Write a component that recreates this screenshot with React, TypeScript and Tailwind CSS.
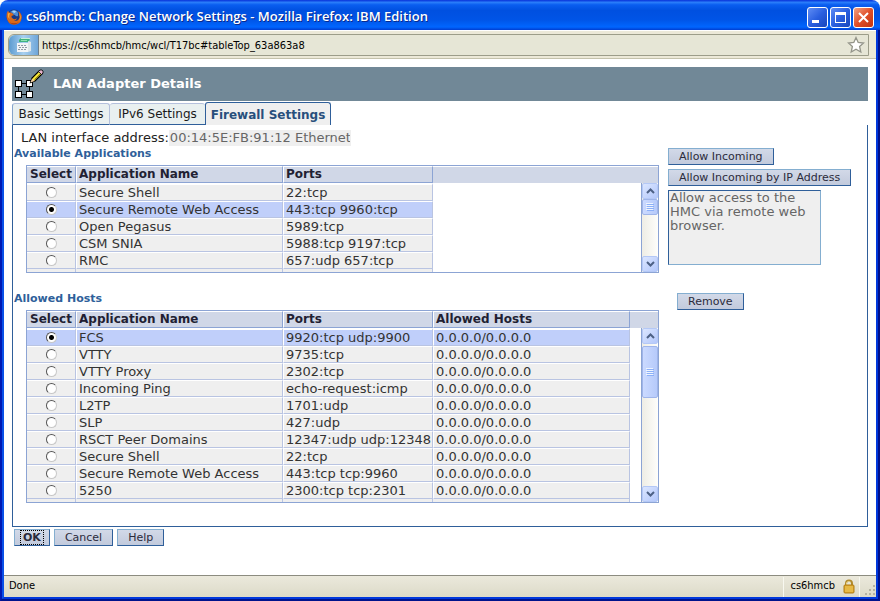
import { useState } from "react";

interface AppRow {
  name: string;
  ports: string;
  hosts?: string;
}

const availableApps: AppRow[] = [
  { name: "Secure Shell", ports: "22:tcp" },
  { name: "Secure Remote Web Access", ports: "443:tcp 9960:tcp" },
  { name: "Open Pegasus", ports: "5989:tcp" },
  { name: "CSM SNIA", ports: "5988:tcp 9197:tcp" },
  { name: "RMC", ports: "657:udp 657:tcp" },
];

const allowedHosts: AppRow[] = [
  { name: "FCS", ports: "9920:tcp udp:9900", hosts: "0.0.0.0/0.0.0.0" },
  { name: "VTTY", ports: "9735:tcp", hosts: "0.0.0.0/0.0.0.0" },
  { name: "VTTY Proxy", ports: "2302:tcp", hosts: "0.0.0.0/0.0.0.0" },
  { name: "Incoming Ping", ports: "echo-request:icmp", hosts: "0.0.0.0/0.0.0.0" },
  { name: "L2TP", ports: "1701:udp", hosts: "0.0.0.0/0.0.0.0" },
  { name: "SLP", ports: "427:udp", hosts: "0.0.0.0/0.0.0.0" },
  { name: "RSCT Peer Domains", ports: "12347:udp udp:12348", hosts: "0.0.0.0/0.0.0.0" },
  { name: "Secure Shell", ports: "22:tcp", hosts: "0.0.0.0/0.0.0.0" },
  { name: "Secure Remote Web Access", ports: "443:tcp tcp:9960", hosts: "0.0.0.0/0.0.0.0" },
  { name: "5250", ports: "2300:tcp tcp:2301", hosts: "0.0.0.0/0.0.0.0" },
];

function FirefoxIcon() {
  return (
    <svg width="16" height="16" viewBox="0 0 16 16" aria-hidden="true">
      <circle cx="8" cy="8" r="7.500" fill="#173a86" />
      <path d="M4 3Q7 0 11 2Q13 4 12 7Q10 8 9 6Q7 6 6 4z" fill="#4f8fd8" />
      <path d="M6 2Q8 1 10 2L9 4Q7 4 6 2z" fill="#a9d2f5" />
      <path d="M0.500 8Q0 4 2 1.500L3 3.500Q5 3 6.500 4.500L8 6L5.500 7Q5 9 7.500 10Q10 10.500 11 9Q10.500 11.500 8 12Q12.500 12.500 13.500 8.500Q14 5 12 2Q16 4.500 15.800 8.500Q15 15.500 8 15.800Q1.500 15.500 0.500 8z" fill="#d9691a" />
      <path d="M2 4.500L4 4Q2.500 7 3.500 10Q1.500 8 2 4.500zM13 4Q16 8 13.500 12Q15 8 13 4z" fill="#f7b340" />
      <path d="M3 13Q8 16 13 13Q8 17.500 3 13z" fill="#8f2a12" />
    </svg>
  );
}

function ServerIcon() {
  return (
    <svg width="16" height="15" viewBox="0 0 16 15" aria-hidden="true">
      <path d="M3 2L5 0h9l-1 4H3z" fill="#3fb37f" />
      <path d="M5 0h9v1H5z" fill="#c4f0d8" />
      <path d="M5 2h6v1H5z" fill="#8fe0b4" />
      <path d="M1 5h11v9H1z" fill="#f3f5f7" />
      <path d="M12 3l3 1v9l-3 1z" fill="#dfe7ea" />
      <path d="M2 7h2v1H2zM5 7h2v1H5zM8 7h2v1H8zM3 9h2v1H3zM6 9h2v1H6zM9 9h2v1H9zM2 11h2v1H2zM5 11h2v1H5zM8 11h2v1H8z" fill="#8d9aa5" />
    </svg>
  );
}

function NetworkEditIcon() {
  return (
    <svg width="30" height="30" viewBox="0 0 30 30" aria-hidden="true">
      <g shapeRendering="crispEdges">
        <path d="M7 14h6M7 25h6v1H7zM4 17h1v5H4zM15 17h1v5h-1zM7 14h6v1H7z" fill="#000" />
        <path d="M1 11h7v7H1zM12 11h7v7h-7zM1 22h7v7H1zM12 22h7v7h-7z" fill="#000" />
        <path d="M2 12h5v5H2zM13 12h5v5h-5zM2 23h5v5H2zM13 23h5v5h-5z" fill="#fff" />
        <path d="M8 14h4v1H8zM8 25h4v1H8zM4 18h1v4H4zM15 18h1v4h-1z" fill="#000" />
      </g>
      <path d="M16.500 13.500L18 9L25.500 1.500L28.500 4.500L21 12z" fill="#f8e838" stroke="#000" strokeWidth="1.200" />
      <path d="M20.500 10.500L26.500 4.500" stroke="#9c8a10" strokeWidth="1" />
      <path d="M16.500 13.500L18 9.500L20.500 12z" fill="#f4d0a8" />
      <path d="M24.500 2.500L26 1H28L29 2V4L27.500 5.500z" fill="#e8b4cc" stroke="#000" strokeWidth="0.800" />
    </svg>
  );
}

function LockIcon() {
  return (
    <svg width="12" height="15" viewBox="0 0 12 15" aria-hidden="true">
      <path d="M3 7V4.500a3 3 0 0 1 6 0V7" fill="none" stroke="#b08a2c" strokeWidth="2" />
      <path d="M3.500 6V4a2.500 2.500 0 0 1 4 -1" fill="none" stroke="#e9d28a" strokeWidth="1" />
      <rect x="1" y="6" width="10" height="8" rx="1" fill="#dca62c" stroke="#b07c14" strokeWidth="1" />
      <path d="M2 8h8M2 10h8M2 12h8" stroke="#f0cc60" strokeWidth="1" />
    </svg>
  );
}

function Arrow({ down = false }: { down?: boolean }) {
  return (
    <button
      type="button"
      aria-label={down ? "Scroll down" : "Scroll up"}
      className="flex h-4 w-4 shrink-0 items-center justify-center rounded-xs border border-[#b4c8f6] bg-gradient-to-br from-[#dbe6ff] to-[#b4c8fb]"
    >
      <svg width="9" height="6" viewBox="0 0 9 6" aria-hidden="true">
        <path d={down ? "M1 1L4.500 4.500L8 1" : "M1 5L4.500 1.500L8 5"} fill="none" stroke="#4d6185" strokeWidth="2" />
      </svg>
    </button>
  );
}

function ScrollBar({ tall = false }: { tall?: boolean }) {
  return (
    <div className="flex w-[17px] flex-1 flex-col self-end border-l border-[#8ca4d4] bg-gradient-to-r from-[#eeede5] to-[#fefefb]">
      <Arrow />
      <div
        className={`${tall ? "mt-0.5 h-[52px]" : "h-4"} flex w-4 items-center justify-center rounded-xs border border-[#9fb5ea] bg-gradient-to-r from-[#cbdaff] to-[#b6cafa]`}
      >
        <svg width="8" height="8" viewBox="0 0 8 8" shapeRendering="crispEdges" aria-hidden="true">
          <path d="M0 0h7v1H0zM0 2h7v1H0zM0 4h7v1H0zM0 6h7v1H0z" fill="#eef4fe" />
          <path d="M1 1h7v1H1zM1 3h7v1H1zM1 5h7v1H1zM1 7h7v1H1z" fill="#8cb0f8" />
        </svg>
      </div>
      <div className="flex-1" />
      <Arrow down />
    </div>
  );
}

interface AppTableProps {
  label: string;
  rows: AppRow[];
  initial: number;
  showHosts?: boolean;
}

function AppTable({ label, rows, initial, showHosts = false }: AppTableProps) {
  const [selected, setSelected] = useState(initial);
  const th = "border-t border-r border-b border-t-white border-r-[#8ca4d4] border-b-[#8ca4d4] bg-[#d0d7e7] p-0 text-[12px] leading-[15px] font-bold whitespace-nowrap";
  const td = "border-r border-b border-t-white border-r-[#b9c4e2] border-b-[#b9c4e2] p-0 whitespace-nowrap";
  const lead = "border-l border-l-white pl-0.5 text-left";
  const edge = "border-r border-[#b9c4e2] bg-[#efefef] p-0";

  return (
    <div className="ml-3 flex overflow-hidden border border-[#8ca4d4]">
      <table
        aria-label={label}
        className={`${showHosts ? "w-[603px]" : "w-[406px]"} shrink-0 table-fixed border-separate border-spacing-0 text-[13px] leading-[15px] text-[#333]`}
      >
        <colgroup>
          <col className="w-[49px]" />
          <col className="w-[207px]" />
          <col className="w-[150px]" />
          {showHosts && <col className="w-[197px]" />}
        </colgroup>
        <thead className="text-[#221f33]">
          <tr>
            <th scope="col" className={th}>Select</th>
            <th scope="col" className={`${th} ${lead}`}>Application Name</th>
            <th scope="col" className={`${th} ${lead}`}>Ports</th>
            {showHosts && <th scope="col" className={`${th} ${lead}`}>Allowed Hosts</th>}
          </tr>
        </thead>
        <tbody>
          {rows.map((row, index) => {
            const bg = index === selected ? "bg-[#c0cffa]" : "bg-[#efefef]";
            const top = index === 0 ? "border-t-2" : "border-t";
            const cell = `${td} ${top} ${bg}`;
            return (
              <tr key={row.name}>
                <td className={cell}>
                  <input
                    type="radio"
                    name={label}
                    aria-label={row.name}
                    checked={index === selected}
                    onChange={() => setSelected(index)}
                    className="mx-auto block size-[11px] appearance-none rounded-full border border-[#c8c8c8] border-t-[#555] border-l-[#555] bg-white checked:bg-[radial-gradient(circle,#000_2px,#fff_3px)]"
                  />
                </td>
                <td className={`${cell} ${lead}`}>{row.name}</td>
                <td className={`${cell} ${lead}`}>{row.ports}</td>
                {showHosts && <td className={`${cell} ${lead}`}>{row.hosts}</td>}
              </tr>
            );
          })}
          {/* top edge of the next row in the scroll area */}
          <tr aria-hidden="true" className="h-[3px]">
            <td className={edge} />
            <td className={edge} />
            <td className={edge} />
            {showHosts && <td className={edge} />}
          </tr>
        </tbody>
      </table>
      <div className="flex flex-1 flex-col">
        <div className="h-[17px] border-t border-white bg-[#d0d7e7]" />
        <ScrollBar tall={showHosts} />
      </div>
    </div>
  );
}

function PushButton({ children, focused = false }: { children: string; focused?: boolean }) {
  return (
    <button
      type="button"
      className={`${focused ? "px-[5px] font-bold" : "px-2.5"} flex h-[17px] items-center border border-t-[#84aed0] border-r-[#2f5f9a] border-b-[#2f5f9a] border-l-[#84aed0] bg-gradient-to-b from-[#d2d9e8] to-[#c2cadc] text-[11px] leading-[13px] whitespace-nowrap text-[#2b2b3b]`}
    >
      {focused ? <span className="border border-dotted border-black px-0.5 leading-[13px]">{children}</span> : children}
    </button>
  );
}

function TitleBar() {
  const box = "flex size-[21px] items-center justify-center rounded-[3px] border border-white";
  const blue = "bg-gradient-to-br from-[#5f8cf4] via-[#2a5fe0] to-[#1846bc]";
  return (
    <header className="flex h-[30px] items-center gap-[2px] bg-[linear-gradient(to_bottom,#0831d9_0%,#2a7dfa_8%,#0a5ef0_16%,#0050e0_35%,#0054e6_65%,#0066ff_90%,#003dd0_100%)] pt-1 pr-[6px] pl-[6px]">
      <FirefoxIcon />
      <h1 className="flex-1 pl-0.5 font-['Open_Sans',sans-serif] text-[13px] font-semibold whitespace-nowrap text-white [text-shadow:1px_1px_#0a2a8c]">
        cs6hmcb: Change Network Settings - Mozilla Firefox: IBM Edition
      </h1>
      <button type="button" aria-label="Minimize" className={`${box} ${blue}`}>
        <svg width="15" height="15" viewBox="0 0 15 15"><path d="M2 10h7v3H2z" fill="#fff" /></svg>
      </button>
      <button type="button" aria-label="Maximize" className={`${box} ${blue}`}>
        <svg width="15" height="15" viewBox="0 0 15 15"><path d="M2 2h11v11H2zM3 5v7h9V5z" fill="#fff" fillRule="evenodd" /></svg>
      </button>
      <button type="button" aria-label="Close" className={`${box} bg-gradient-to-br from-[#f0a080] via-[#e04e28] to-[#c03410]`}>
        <svg width="15" height="15" viewBox="0 0 15 15"><path d="M3 3l9 9M12 3l-9 9" stroke="#fff" strokeWidth="2" /></svg>
      </button>
    </header>
  );
}

function AddressBar() {
  return (
    <div className="border-t border-b border-t-white border-b-[#c4c2ac] bg-[#ece9d8] pt-[3px] pr-[7px] pb-0.5 pl-1">
      <div className="flex h-[22px] items-center rounded-l-md border border-[#9c9d8a] bg-[#e6e6d6]">
        <button
          type="button"
          aria-label="Site identity"
          className="flex h-5 w-[30px] items-center justify-center rounded-l-md border-r border-[#6f7f8c] bg-gradient-to-r from-[#5b9bd0] via-[#a8d0f0] to-[#6fa6d8]"
        >
          <ServerIcon />
        </button>
        <input
          type="text"
          aria-label="Address"
          defaultValue="https://cs6hmcb/hmc/wcl/T17bc#tableTop_63a863a8"
          className="min-w-0 flex-1 bg-transparent pt-0.5 pl-[3px] text-[11px] text-black outline-none [font-family:'DejaVu_Sans_Condensed','DejaVu_Sans',sans-serif]"
        />
        <button type="button" aria-label="Bookmark" className="mr-[3px]">
          <svg width="18" height="18" viewBox="0 0 18 18">
            <path d="M9 1.500L11.200 6.500L16.500 7L12.600 10.500L13.800 16L9 13.200L4.200 16L5.400 10.500L1.500 7L6.800 6.500z" fill="#fff" stroke="#94958a" strokeWidth="1.300" />
          </svg>
        </button>
      </div>
    </div>
  );
}

function Tabs() {
  const tab = "flex h-[22px] items-center justify-center rounded-t-[3px] border border-[#b4c0dc] border-b-[#2f5f9a] bg-[#e9f0f0] text-[12px] whitespace-nowrap text-[#1a1a1a]";
  return (
    <div role="tablist" className="mt-px flex items-end">
      <button type="button" role="tab" aria-selected="false" className={`${tab} w-[98px] border-l-[#84a4cc]`}>Basic Settings</button>
      <button type="button" role="tab" aria-selected="false" className={`${tab} w-[95px] border-r-0 border-l-0`}>IPv6 Settings</button>
      <button
        type="button"
        role="tab"
        aria-selected="true"
        className="flex h-[23px] w-[126px] items-center justify-center rounded-t-[3px] border border-b-0 border-[#2f5f9a] bg-[#efefef] pt-0.5 text-[12px] font-bold whitespace-nowrap text-[#284f7c]"
      >
        Firewall Settings
      </button>
    </div>
  );
}

export default function App() {
  return (
    <div className="flex min-h-screen flex-col overflow-hidden rounded-t-lg bg-white font-['DejaVu_Sans',sans-serif]">
      <TitleBar />
      <div className="flex flex-1 flex-col border-x-2 border-b-2 border-t-0 border-[#0019b4] border-r-[#00108c] border-b-[#00138c]">
        <div className="flex flex-1 flex-col border-x-2 border-b-2 border-[#0a50e8] border-r-[#0038dc] border-b-[#0038dc]">
          <AddressBar />

          <main className="flex-1 px-2 pt-2">
            <div className="flex h-[34px] items-center gap-[9px] bg-[#718897] pl-0.5">
              <NetworkEditIcon />
              <h2 className="text-[13px] font-bold text-white">LAN Adapter Details</h2>
            </div>

            <Tabs />

            <div className="border-r border-b border-l border-[#2f5f9a] pb-[23px]">
              <div className="flex h-[22px] items-center pt-1 pl-2 text-[13px]">
                <label htmlFor="lan-address" className="text-[#222]">LAN interface address:</label>
                <input
                  id="lan-address"
                  readOnly
                  value="00:14:5E:FB:91:12 Ethernet"
                  className="h-4 w-[182px] bg-[#efefef] px-px text-[#666] outline-none"
                />
              </div>

              <div className="flex items-start gap-[9px] pl-px">
                <section className="min-w-0 flex-1">
                  <h3 className="mb-[5px] text-[11px] leading-[13px] font-bold text-[#2f5f9a]">Available Applications</h3>
                  <AppTable label="Available Applications" rows={availableApps} initial={1} />
                </section>
                <div className="flex w-[199px] shrink-0 flex-col items-start gap-1 pt-px">
                  <PushButton>Allow Incoming</PushButton>
                  <PushButton>Allow Incoming by IP Address</PushButton>
                  <textarea
                    aria-label="Description"
                    readOnly
                    value="Allow access to the HMC via remote web browser."
                    className="block h-[75px] w-[153px] resize-none border border-t-[#2f5f9a] border-r-[#84aed0] border-b-[#84aed0] border-l-[#2f5f9a] bg-[#efefef] px-px text-[13px] leading-[14px] text-[#666] outline-none"
                  />
                </div>
              </div>

              <div className="mt-[19px] flex items-start gap-[9px] pl-px">
                <section className="min-w-0 flex-1">
                  <h3 className="mb-[5px] text-[11px] leading-[13px] font-bold text-[#2f5f9a]">Allowed Hosts</h3>
                  <AppTable label="Allowed Hosts" rows={allowedHosts} initial={0} showHosts />
                </section>
                <div className="w-[199px] shrink-0 pt-px pl-[9px]">
                  <PushButton>Remove</PushButton>
                </div>
              </div>
            </div>

            <div className="mt-0.5 flex gap-1 pl-0.5">
              <PushButton focused>OK</PushButton>
              <PushButton>Cancel</PushButton>
              <PushButton>Help</PushButton>
            </div>
          </main>

          <footer className="flex h-[22px] items-center border-t border-[#8c8c80] bg-gradient-to-b from-[#ebe9dc] to-[#dcdac8] pl-[5px] text-[11px] text-black [font-family:'DejaVu_Sans_Condensed','DejaVu_Sans',sans-serif]">
            <span className="flex-1">Done</span>
            <div className="flex h-5 items-center gap-2 border-x border-[#f8f8f0] pr-1 pl-1.5">
              <span>cs6hmcb</span>
              <LockIcon />
            </div>
            <svg width="16" height="18" viewBox="0 0 16 18" shapeRendering="crispEdges" aria-hidden="true">
              <path d="M13 7h2v2h-2zM9 11h2v2H9zM13 11h2v2h-2zM5 15h2v2H5zM9 15h2v2H9zM13 15h2v2h-2z" fill="#b4b2a2" />
            </svg>
          </footer>
        </div>
      </div>
    </div>
  );
}
